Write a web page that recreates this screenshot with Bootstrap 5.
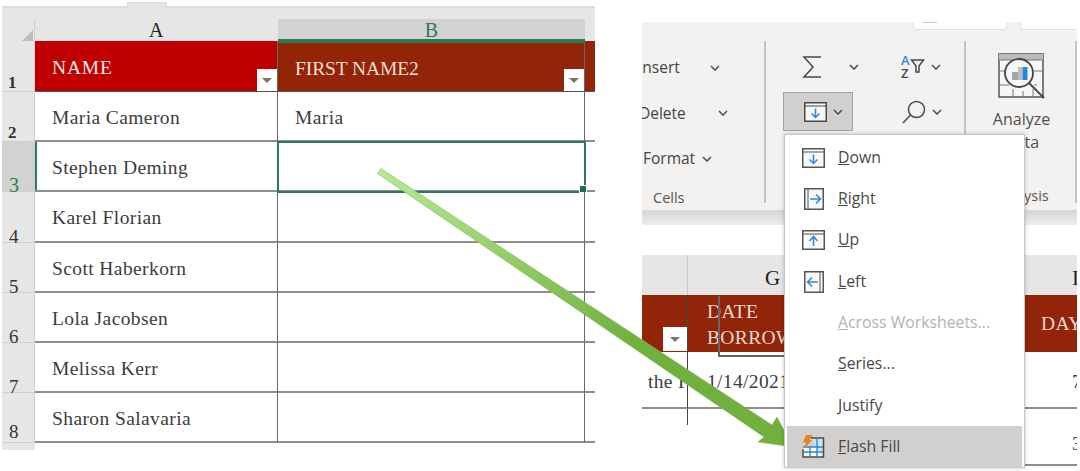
<!DOCTYPE html>
<html lang="en">
<head>
<meta charset="UTF-8">
<title>Flash Fill</title>
<link href="https://cdn.jsdelivr.net/npm/bootstrap@5.3.0/dist/css/bootstrap.min.css" rel="stylesheet">
<style>
body { width: 1080px; height: 471px; overflow: hidden; background: #fff; color: #444; position: relative; font-family: "Open Sans", sans-serif; }

/* left sheet */
.sheet-left { display: grid; grid-template-columns: 33px 243px 307px 10px; grid-template-rows: 13px 22px 51px repeat(7, 50.2px) 7px; margin: 6px 0 0 2px; font-family: "Liberation Serif", serif; font-size: 19.5px; letter-spacing: .4px; color: #3c3c3c; }
.top-strip { grid-column: 1 / 5; background: #e6e6e6; border-top: 2px solid #dcdcdc; position: relative; }
.top-tab { position: absolute; left: 125px; top: -6px; width: 40px; height: 6px; background: #e6e6e6; border: 1px solid #dcdcdc; border-bottom: 0; }
.strip { background: #e6e6e6; }
.corner { padding: 3px 0 0 14px; border-right: 1px solid #d0d0d0; }
.col-head { font-size: 20px; line-height: 22px; text-align: center; color: #222; }
.col-on { background: #d2d2d0; color: #2d7a58; border-bottom: 2px solid #2d7a58; }
.row-head { display: flex; align-items: flex-end; padding: 0 0 0 7px; width: 33px; font-size: 19px; line-height: 11px; color: #333; background: #e6e6e6; border-bottom: 1px solid #cfcfcf; border-right: 1px solid #d0d0d0; }
.num-top { font-size: 17px; font-weight: 700; line-height: 17px; padding-left: 6px; }
.num-tall { line-height: 21px; }
.row-on { background: #d2d2d0; color: #2d7a58; font-size: 20px; }
.sheet-cell { display: flex; align-items: center; padding: 3px 0 0 17px; border-bottom: 2px solid #8e8e8e; border-right: 1px solid #666; position: relative; }
.head-a { background: #c00000; color: #fbeaea; border-bottom: 1px solid #555; padding-top: 4px; letter-spacing: .8px; }
.head-b { background: #922408; color: #f3dfd8; border-bottom: 1px solid #555; border-top: 2px solid #2d7a58; letter-spacing: -.1px; padding-top: 3px; }
.head-c { background: #922408; border-bottom: 1px solid #555; }
.tail { border-bottom: 2px solid #8e8e8e; }
.filter-btn { position: absolute; right: 0; bottom: 0; width: 20px; height: 22px; background: #fff; display: flex; align-items: center; justify-content: center; }
.filter-btn::after { content: ""; border-left: 5px solid transparent; border-right: 5px solid transparent; border-top: 5px solid #777; }
.cell-picked { outline: 2px solid #2d7a58; outline-offset: -1px; }
.a-picked { box-shadow: inset 2px 0 0 #2d7a58; }
.fill-handle { position: absolute; right: -3px; bottom: -3px; width: 6px; height: 6px; background: #1f6b4a; border: 1px solid #fff; box-sizing: content-box; }

/* right column */
.right-col { width: 435px; margin: 22px 0 0 47px; }
.ribbon { height: 188px; background: #f3f2f1; padding-top: 19px; overflow: hidden; position: relative; font-size: 16px; }
.group-tabs { position: absolute; left: 271px; top: 0; height: 8px; width: 164px; gap: 13px; }
.group-tabs span { flex: 0 0 94px; background: #fff; border: 1px solid #e0e0e0; border-top: 0; border-radius: 0 0 3px 3px; }
.group-tabs span + span { flex: 1; border-right: 0; }
.tab-mark { display: block; width: 14px; height: 1px; margin-left: 9px; background: #b9d4c3; }
.rb-group { height: 162px; border-right: 2px solid #c4c4c4; }
.group-cells { width: 124px; padding-top: 4px; font-size: 15.5px; }
.group-edit { width: 200px; padding-top: 6px; }
.group-data { flex: 1; }
.rb-row { height: 45.5px; }
.rb-label { font-size: 14.5px; height: 20px; line-height: 20px; margin-top: 6px; color: #555; }
.chev { display: block; flex: none; }
.chev path { fill: none; stroke: #505050; stroke-width: 1.6; }
.btn-fill { width: 70px; height: 39px; background: #d2d0ce; border: 1px solid #a5a3a1; margin-left: 17px; padding-left: 20px; }
.btn-plain { width: 70px; height: 39px; margin-left: 17px; padding-left: 19px; }
.btn-plain svg, .btn-fill svg { flex: none; }
.analyze-text { font-size: 16px; line-height: 23px; text-align: center; color: #505050; }
.rb-shadow { height: 15px; background: linear-gradient(#d6d6d6, #ececec); }

/* lower sheet */
.sheet-low { display: grid; grid-template-columns: 46px 336px 53px; grid-template-rows: 40px 57px 57px 57px; margin-top: 30px; font-family: "Liberation Serif", serif; font-size: 19.5px; letter-spacing: .35px; color: #3c3c3c; overflow: hidden; }
.low-head { background: #e6e6e6; font-size: 21px; color: #222; line-height: 47px; overflow: hidden; }
.low-red { background: #922408; color: #ecd8d0; position: relative; }
.low-cell { border-bottom: 2px solid #8e8e8e; white-space: nowrap; overflow: hidden; line-height: 60px; }
.low-stub { height: 16px; border-bottom: 0; }
.picked-box { position: absolute; left: 30px; top: 1px; right: 0; height: 61px; border-left: 2px solid #666; border-bottom: 2px solid #666; }

/* fill menu */
.fill-menu { left: 784px; top: 134px; width: 241px; height: 334px; padding: 2px 2px 0; margin: 0; border: 1px solid #c8c6c4; border-radius: 0; box-shadow: 0 0 4px rgba(0,0,0,.22); font-size: 15.8px; }
.fill-menu .dropdown-item { height: 41.3px; padding: 0 0 0 15px; gap: 13px; color: #484848; display: flex; align-items: center; }
.fill-menu .dropdown-item.disabled { color: #b4b2b0; }
.fill-menu .dropdown-item.active { background: #d2d0ce; color: #484848; }
.menu-ico { width: 23px; flex: none; }
.big-arrow { position: absolute; left: 0; top: 0; pointer-events: none; }
</style>
</head>
<body>
<div class="d-flex align-items-start">

  <!-- left sheet -->
  <div class="sheet-left">
    <div class="top-strip"><div class="top-tab"></div></div>
    <div class="strip corner"><svg width="18" height="17" viewBox="0 0 18 17"><path d="M17 0v17H0z" fill="#bdbdbd"/></svg></div>
    <div class="strip col-head">A</div>
    <div class="strip col-head col-on">B</div>
    <div class="strip"></div>

    <div class="row-head num-top">1</div>
    <div class="sheet-cell head-a">NAME<span class="filter-btn"></span></div>
    <div class="sheet-cell head-b">FIRST NAME2<span class="filter-btn"></span></div>
    <div class="head-c"></div>

    <div class="row-head num-top">2</div>
    <div class="sheet-cell">Maria Cameron</div>
    <div class="sheet-cell">Maria</div>
    <div class="tail"></div>

    <div class="row-head row-on">3</div>
    <div class="sheet-cell a-picked">Stephen Deming</div>
    <div class="sheet-cell cell-picked"><span class="fill-handle"></span></div>
    <div class="tail"></div>

    <div class="row-head">4</div>
    <div class="sheet-cell">Karel Florian</div>
    <div class="sheet-cell"></div>
    <div class="tail"></div>

    <div class="row-head">5</div>
    <div class="sheet-cell">Scott Haberkorn</div>
    <div class="sheet-cell"></div>
    <div class="tail"></div>

    <div class="row-head">6</div>
    <div class="sheet-cell">Lola Jacobsen</div>
    <div class="sheet-cell"></div>
    <div class="tail"></div>

    <div class="row-head">7</div>
    <div class="sheet-cell">Melissa Kerr</div>
    <div class="sheet-cell"></div>
    <div class="tail"></div>

    <div class="row-head num-tall">8</div>
    <div class="sheet-cell">Sharon Salavaria</div>
    <div class="sheet-cell"></div>
    <div class="tail"></div>

    <div class="strip" style="grid-column: 1"></div>
  </div>

  <!-- right column -->
  <div class="right-col">
    <div class="ribbon">
      <div class="group-tabs d-flex"><span><i class="tab-mark"></i></span><span></span></div>
      <div class="d-flex">
        <div class="rb-group group-cells">
          <div class="rb-row d-flex align-items-center" style="margin-left:-4px"><span>Insert</span>
            <svg class="chev" style="margin-left:30px" width="10" height="6" viewBox="0 0 10 6"><path d="M1 1l4 4 4-4"/></svg></div>
          <div class="rb-row d-flex align-items-center" style="margin-left:-3px"><span>Delete</span>
            <svg class="chev" style="margin-left:32px" width="10" height="6" viewBox="0 0 10 6"><path d="M1 1l4 4 4-4"/></svg></div>
          <div class="rb-row d-flex align-items-center" style="margin-left:1px"><span>Format</span>
            <svg class="chev" style="margin-left:7px" width="10" height="6" viewBox="0 0 10 6"><path d="M1 1l4 4 4-4"/></svg></div>
          <div class="rb-label" style="padding-left:11px">Cells</div>
        </div>

        <div class="rb-group group-edit">
          <div class="d-flex">
            <div>
              <div class="d-flex align-items-center btn-plain">
                <svg width="20" height="22" viewBox="0 0 20 22"><path d="M19 1H2l9 10-9 10h17" fill="none" stroke="#484848" stroke-width="1.5"/></svg>
                <svg class="chev" style="margin-left:27px" width="10" height="6" viewBox="0 0 10 6"><path d="M1 1l4 4 4-4"/></svg>
              </div>
              <div class="d-flex align-items-center btn-fill" style="margin-top:6px">
                <svg width="23" height="20" viewBox="0 0 23 20"><rect x=".75" y=".75" width="21.5" height="18.5" fill="#f7f7f5" stroke="#484848" stroke-width="1.5"/><path d="M1 4h21" stroke="#484848"/><path d="M11.500 6.500v9M7.500 11.500l4 4 4-4" fill="none" stroke="#2b88d8" stroke-width="1.500"/></svg>
                <svg class="chev" style="margin-left:6px" width="10" height="6" viewBox="0 0 10 6"><path d="M1 1l4 4 4-4"/></svg>
              </div>
            </div>
            <div style="margin-left:48px">
              <div class="d-flex align-items-center" style="height:39px">
                <svg width="26" height="25" viewBox="0 0 26 25"><text x="0" y="11" font-family="Open Sans, sans-serif" font-size="13" font-weight="600" fill="#2b88d8">A</text><text x="0" y="24" font-family="Open Sans, sans-serif" font-size="13" font-weight="600" fill="#484848">Z</text><path d="M10.500 6h12l-4.500 6v6h-3v-6z" fill="none" stroke="#484848" stroke-width="1.500"/></svg>
                <svg class="chev" style="margin-left:4px" width="10" height="6" viewBox="0 0 10 6"><path d="M1 1l4 4 4-4"/></svg>
              </div>
              <div class="d-flex align-items-center" style="height:39px;margin-top:6px;padding-left:1px">
                <svg width="24" height="24" viewBox="0 0 24 24"><circle cx="14.500" cy="9.500" r="8" fill="none" stroke="#484848" stroke-width="1.500"/><path d="M8.500 15L1 23" stroke="#484848" stroke-width="1.500"/></svg>
                <svg class="chev" style="margin-left:6px" width="10" height="6" viewBox="0 0 10 6"><path d="M1 1l4 4 4-4"/></svg>
              </div>
            </div>
          </div>
        </div>

        <div class="rb-group group-data d-flex flex-column align-items-center" style="padding-left:2px">
          <svg style="margin-top:12px;flex:none" width="47" height="47" viewBox="0 0 47 47"><rect x="1" y="1" width="44" height="43" fill="#f7f7f5" stroke="#555" stroke-width="1.5"/><rect x="1" y="1" width="44" height="6" fill="#bdbcbb"/><path d="M1 7h44M1 18h8M36 18h9M1 32h10M36 32h3M15 36v8M25 38v6M35 36v8" stroke="#777"/><circle cx="21" cy="20" r="14" fill="#f7f7f5" stroke="#444" stroke-width="1.8"/><path d="M31 30l15 15" stroke="#444" stroke-width="1.8"/><rect x="14" y="19" width="6" height="8" fill="#a5a5a5"/><rect x="20" y="14" width="4.500" height="13" fill="#bcbcbc"/><rect x="24.500" y="14" width="5" height="13" fill="#2b88d8"/></svg>
          <div class="analyze-text" style="margin-top:8px">Analyze<br>Data</div>
          <div class="rb-label" style="margin-top:32px;flex:none">Analysis</div>
        </div>
      </div>
    </div>
    <div class="rb-shadow"></div>

    <div class="sheet-low">
      <div class="low-head" style="border-right:1px solid #c8c8c8"></div>
      <div class="low-head" style="padding-left:77px">G</div>
      <div class="low-head" style="padding-left:48px">I</div>

      <div class="low-red" style="border-right:1px solid #444"><span class="filter-btn" style="width:24px;height:24px;bottom:1px"></span></div>
      <div class="low-red" style="padding:4px 0 0 19px;line-height:26px">DATE<br>BORROWED<span class="picked-box"></span></div>
      <div class="low-red" style="line-height:57px;padding-left:17px;white-space:nowrap;overflow:hidden">DAYS</div>

      <div class="low-cell" style="border-right:1px solid #444;padding-left:6px">the F</div>
      <div class="low-cell" style="padding-left:19px">1/14/2021</div>
      <div class="low-cell" style="padding-left:48px">7</div>

      <div class="low-cell low-stub" style="border-right:1px solid #444;border-bottom:0"></div>
      <div class="low-cell low-stub" style="border-bottom:0"></div>
      <div class="low-cell" style="padding-left:48px;line-height:70px">3</div>
    </div>
  </div>
</div>

<!-- fill dropdown -->
<ul class="dropdown-menu show fill-menu">
  <li><a class="dropdown-item" href="#"><svg class="menu-ico" height="20" viewBox="0 0 23 20"><rect x=".75" y=".75" width="21.5" height="18.5" fill="#f9f9f7" stroke="#555" stroke-width="1.5"/><path d="M1 4h21" stroke="#555"/><path d="M11.500 6.500v9M7.500 11.500l4 4 4-4" fill="none" stroke="#2b88d8" stroke-width="1.500"/></svg><span><u>D</u>own</span></a></li>
  <li><a class="dropdown-item" href="#"><svg class="menu-ico" height="22" viewBox="0 0 23 22"><rect x="2.750" y=".75" width="18.500" height="20.500" fill="#f9f9f7" stroke="#555" stroke-width="1.5"/><path d="M6 1v20" stroke="#555"/><path d="M8 11h10M14 6.500l4.500 4.500-4.500 4.500" fill="none" stroke="#2b88d8" stroke-width="1.500"/></svg><span><u>R</u>ight</span></a></li>
  <li><a class="dropdown-item" href="#"><svg class="menu-ico" height="20" viewBox="0 0 23 20"><rect x=".75" y=".75" width="21.5" height="18.5" fill="#f9f9f7" stroke="#555" stroke-width="1.5"/><path d="M1 4h21" stroke="#555"/><path d="M11.500 16V7M7.500 11l4-4.500 4 4.500" fill="none" stroke="#2b88d8" stroke-width="1.500"/></svg><span><u>U</u>p</span></a></li>
  <li><a class="dropdown-item" href="#"><svg class="menu-ico" height="22" viewBox="0 0 23 22"><rect x="2.750" y=".75" width="18.500" height="20.500" fill="#f9f9f7" stroke="#555" stroke-width="1.5"/><path d="M18 1v20" stroke="#555"/><path d="M16 11H6M10 6.500L5.500 11l4.500 4.500" fill="none" stroke="#2b88d8" stroke-width="1.500"/></svg><span><u>L</u>eft</span></a></li>
  <li><a class="dropdown-item disabled" href="#"><span class="menu-ico"></span><span><u>A</u>cross Worksheets...</span></a></li>
  <li><a class="dropdown-item" href="#"><span class="menu-ico"></span><span><u>S</u>eries...</span></a></li>
  <li><a class="dropdown-item" href="#"><span class="menu-ico"></span><span><u>J</u>ustify</span></a></li>
  <li><a class="dropdown-item active" href="#"><svg class="menu-ico" height="24" viewBox="0 0 23 24"><path d="M1 12h21v10H1z" fill="#f9f9f7"/><path d="M9 3h12v19" fill="#cfe3f5"/><path d="M9 3h12.500v19H1v-8" fill="none" stroke="#4a4a4a" stroke-width="1.500"/><path d="M1 12h20M1 17h20M8 12v10M15 3v19" fill="none" stroke="#2b88d8" stroke-width="1.400"/><path d="M4 0h6.500L7.500 5H10L2 14l2-6.500H1z" fill="#e8821e"/></svg><span><u>F</u>lash Fill</span></a></li>
</ul>

<!-- green arrow across both shots -->
<svg class="big-arrow" width="1080" height="471" viewBox="0 0 1080 471">
  <defs>
    <linearGradient id="arrowFill" gradientUnits="userSpaceOnUse" x1="380" y1="172" x2="640" y2="345">
      <stop offset="0" stop-color="#b4ec8e"/>
      <stop offset="1" stop-color="#70b03c"/>
    </linearGradient>
  </defs>
  <path d="M377.500 173.500L381 168.500L772 425L777 417L793 447L758 442L764 437Z" fill="url(#arrowFill)" stroke="#8fb07a" stroke-width=".6"/>
</svg>

<script src="https://cdn.jsdelivr.net/npm/bootstrap@5.3.0/dist/js/bootstrap.bundle.min.js"></script>
</body>
</html>
